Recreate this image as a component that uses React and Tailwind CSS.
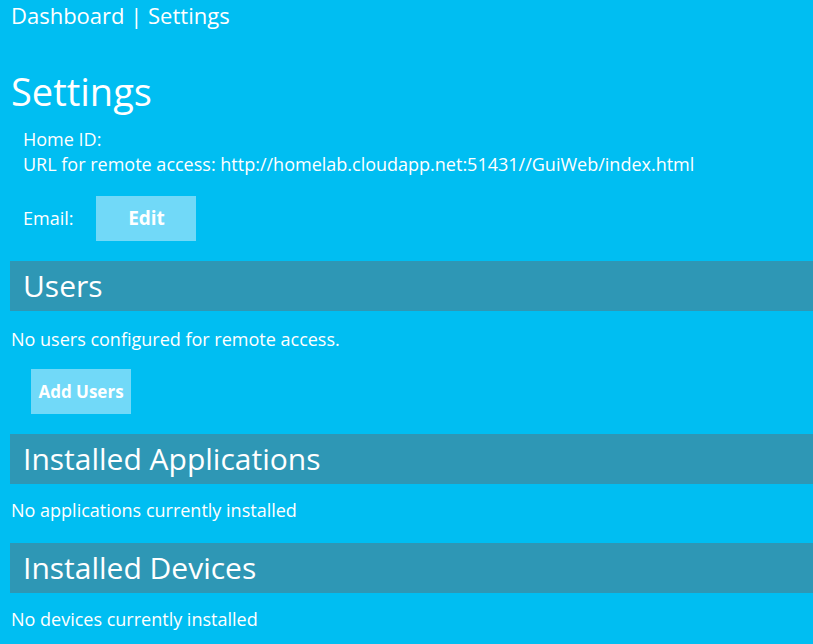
const font = { fontFamily: '"Segoe UI", "Open Sans", "Noto Sans", sans-serif' };

const SectionBar = ({ title }) => (
  <div className="ml-[10px] h-[50px] bg-[#2e97b5] flex items-center pl-[13px]">
    <h2 className="text-[30px] leading-none text-white font-normal">{title}</h2>
  </div>
);

const App = () => {
  return (
    <div className="min-h-[644px] w-full bg-[#00bef2] text-white overflow-hidden" style={font}>
      <div className="pl-[11px] pt-[2px] text-[22px] leading-[26px]">Dashboard | Settings</div>

      <h1 className="pl-[11px] mt-[41px] text-[38px] leading-[44px] font-normal">Settings</h1>

      <div className="pl-[23px] mt-[14px] text-[18px] leading-[25px]">
        <div>Home ID:</div>
        <div>URL for remote access: http://homelab.cloudapp.net:51431//GuiWeb/index.html</div>
      </div>

      <div className="pl-[23px] mt-[19px] flex items-center gap-[23px] text-[18px]">
        <span>Email:</span>
        <button className="w-[100px] h-[45px] bg-[#71d9f8] text-white font-bold text-[19px]">Edit</button>
      </div>

      <div className="mt-[20px]">
        <SectionBar title="Users" />
      </div>
      <p className="pl-[11px] mt-[16px] text-[18px] leading-[24px]">No users configured for remote access.</p>
      <div className="pl-[31px] mt-[18px]">
        <button className="w-[100px] h-[45px] bg-[#71d9f8] text-white font-bold text-[17px]">Add Users</button>
      </div>

      <div className="mt-[20px]">
        <SectionBar title="Installed Applications" />
      </div>
      <p className="pl-[11px] mt-[14px] text-[18px] leading-[24px]">No applications currently installed</p>

      <div className="mt-[21px]">
        <SectionBar title="Installed Devices" />
      </div>
      <p className="pl-[11px] mt-[14px] text-[18px] leading-[24px]">No devices currently installed</p>
    </div>
  );
};

export default App;
